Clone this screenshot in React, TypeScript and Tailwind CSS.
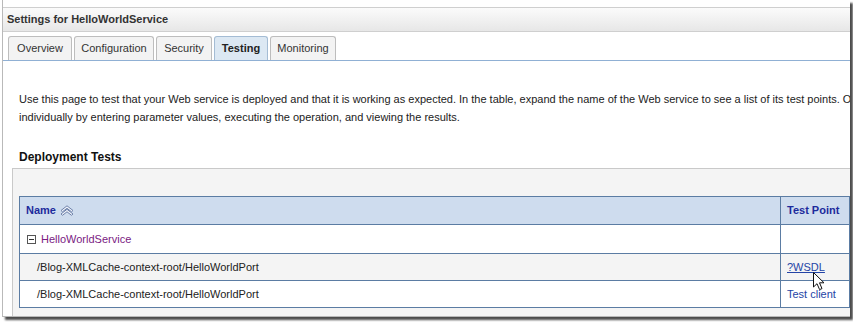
import React from "react";

const tabs = [
    { label: "Overview", w: "w-[64px]" },
    { label: "Configuration", w: "w-[80px]" },
    { label: "Security", w: "w-[56px]" },
    { label: "Testing", w: "w-[54px]", active: true },
    { label: "Monitoring", w: "w-[66px]" },
];

const portPath = "/Blog-XMLCache-context-root/HelloWorldPort";

function SortIcon() {
    return (
        <svg width="14" height="11" viewBox="0 0 14 11" className="ml-[4px]">
            <path
                d="M1 5.5 L7 0.8 L13 5.5 L11.5 6.8 L7 3.3 L2.5 6.8 Z"
                fill="#eef2fa"
                stroke="#6f82aa"
                strokeWidth="1"
                strokeLinejoin="round"
            />
            <path
                d="M1 9 L7 4.3 L13 9 L11.5 10.3 L7 6.8 L2.5 10.3 Z"
                fill="#eef2fa"
                stroke="#6f82aa"
                strokeWidth="1"
                strokeLinejoin="round"
            />
        </svg>
    );
}

function MinusBox() {
    return (
        <svg width="9" height="9" viewBox="0 0 9 9" className="mr-[5px]">
            <rect x="0.5" y="0.5" width="8" height="8" fill="#ffffff" stroke="#555555" />
            <path d="M2 4.5 H7" stroke="#333333" />
        </svg>
    );
}

function Pointer() {
    return (
        <svg
            width="13"
            height="19"
            viewBox="0 0 13 19"
            className="absolute left-[813px] top-[272px]"
        >
            <path
                d="M0.5 0.5 L0.5 15 L4 11.7 L6.6 17.6 L9 16.6 L6.5 10.8 L11 10.8 Z"
                fill="#ffffff"
                stroke="#111111"
                strokeWidth="1"
                strokeLinejoin="round"
            />
        </svg>
    );
}

export default function App() {
    return (
        <div className="relative h-[322px] w-[853px] overflow-hidden bg-white font-['Liberation_Sans',Arial,sans-serif] text-[11px] text-[#222]">
            <div className="ml-[2px] h-[317px] w-[848px] overflow-hidden border-l border-b border-[#b9b9b9] bg-white pt-[7px] shadow-[3px_3px_2px_rgba(0,0,0,0.7)]">
                <div className="flex h-[25px] items-center border-t border-b border-[#cfcfcf] bg-gradient-to-b from-[#fbfbfb] to-[#e7e7e7] pl-[4px] font-bold text-[#333]">
                    Settings for HelloWorldService
                </div>

                <div className="mt-[4px] flex gap-[2px] pl-[5px]">
                    {tabs.map((t) => (
                        <div
                            key={t.label}
                            className={
                                t.active
                                    ? `${t.w} flex h-[24px] items-center justify-center rounded-t-[3px] border border-b-0 border-[#a4bcd4] bg-[#dce8f3] font-bold text-[#222]`
                                    : `${t.w} flex h-[24px] items-center justify-center rounded-t-[3px] border border-b-0 border-[#bdbdbd] bg-[#f3f3f3] text-[#333]`
                            }
                        >
                            {t.label}
                        </div>
                    ))}
                </div>
                <div className="h-px bg-[#90b0d4]" />

                <div className="mt-[29px] pl-[16px] leading-[18px]">
                    <p className="whitespace-nowrap">
                        Use this page to test that your Web service is deployed and that it is working as expected. In the table, expand the name of the Web service to see a list of its test points. O
                    </p>
                    <p className="whitespace-nowrap">
                        individually by entering parameter values, executing the operation, and viewing the results.
                    </p>
                </div>

                <h2 className="mt-[23px] pl-[16px] text-[12px] leading-[16px] font-bold text-[#111]">
                    Deployment Tests
                </h2>

                <div className="ml-[9px] mt-[3px] h-[200px] w-[860px] border-t border-l border-[#c9c9c9] bg-[#f4f4f4] pt-[27px] pl-[6px]">
                    <div className="w-[831px] border border-[#5b7ca3] bg-white">
                        <div className="flex h-[28px] border-b border-[#5b7ca3] bg-[#cedcee] font-bold text-[#1d2b9c]">
                            <div className="flex w-[761px] items-center border-r border-[#5b7ca3] pl-[6px]">
                                Name
                                <SortIcon />
                            </div>
                            <div className="flex flex-1 items-center pl-[6px]">Test Point</div>
                        </div>
                        <div className="flex h-[29px] border-b border-[#5b7ca3] bg-white">
                            <div className="flex w-[761px] items-center border-r border-[#5b7ca3] pl-[7px] text-[#7a1a82]">
                                <MinusBox />
                                HelloWorldService
                            </div>
                            <div className="flex-1" />
                        </div>
                        <div className="flex h-[27px] border-b border-[#5b7ca3] bg-[#f4f4f4]">
                            <div className="flex w-[761px] items-center border-r border-[#5b7ca3] pl-[17px]">
                                {portPath}
                            </div>
                            <div className="flex flex-1 items-center pl-[6px]">
                                <a className="text-[#2444a6] underline">?WSDL</a>
                            </div>
                        </div>
                        <div className="flex h-[26px] bg-white">
                            <div className="flex w-[761px] items-center border-r border-[#5b7ca3] pl-[17px]">
                                {portPath}
                            </div>
                            <div className="flex flex-1 items-center pl-[6px]">
                                <a className="text-[#2444a6]">Test client</a>
                            </div>
                        </div>
                    </div>
                </div>
            </div>
            <Pointer />
        </div>
    );
}
